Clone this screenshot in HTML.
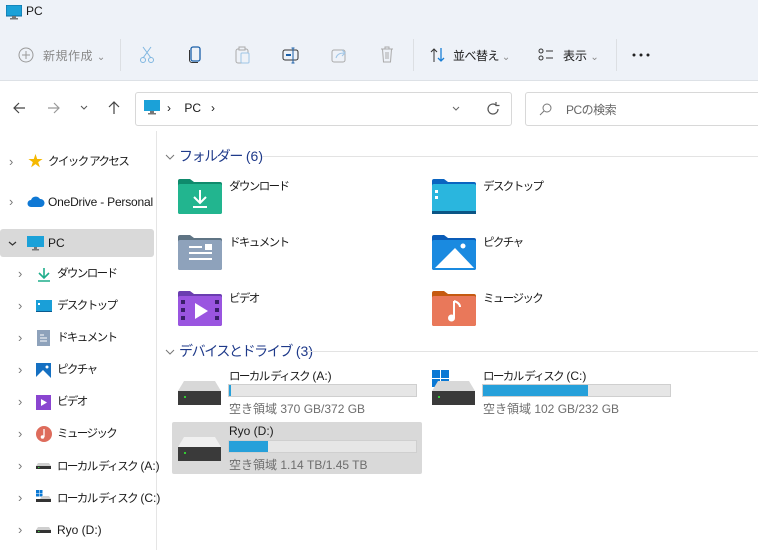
<!DOCTYPE html>
<html><head><meta charset="utf-8"><style>
*{margin:0;padding:0;box-sizing:border-box}
body{width:758px;height:550px;overflow:hidden;background:#fff;font-family:"Liberation Sans","Noto Sans CJK JP",sans-serif;font-size:12px;color:#1a1a1a;position:relative}
.a{position:absolute}
.j{letter-spacing:-1.6px;font-size:11.5px}
.l{letter-spacing:0;font-size:12px}
.hdr .l{font-size:14px}
.top{left:0;top:0;width:758px;height:81px;background:#eef2f8;border-bottom:1px solid #dde1e6}
.g{color:#8a8a8a}
.sep{width:1px;height:32px;background:#dcdfe3;top:39px}
.box{border:1px solid #d8d8d8;border-radius:3px;background:#fff}
.side .it{position:absolute;left:0;width:155px;height:28px;line-height:28px;white-space:nowrap}
.chev{position:absolute;font-size:13px;color:#777}
.hdr{color:#1f3a8a;font-size:14px;letter-spacing:-1.4px}
.line{height:1px;background:#e3e3e3}
.bar{height:13px;background:#e6e6e6;border:1px solid #cfcfcf}
.bar i{display:block;height:100%;background:#26a0da}
.sub{color:#6d6d6d}
</style></head><body>
<div class="a top"></div>
<svg class="a" style="left:6px;top:5px" width="16" height="15"><rect x="0" y="0" width="16" height="11" fill="#1ba1d8"/><rect x="0" y="0" width="16" height="11" fill="none" stroke="#0e6aa0"/><rect x="6" y="11" width="4" height="2" fill="#777"/><rect x="4" y="13" width="8" height="1.5" fill="#777"/></svg>
<div class="a" style="left:26px;top:4px;font-size:12px">PC</div>
<svg class="a" style="left:18px;top:47px" width="16" height="16"><circle cx="8" cy="8" r="7" fill="none" stroke="#9a9a9a"/><path d="M8 4v8M4 8h8" stroke="#9a9a9a"/></svg>
<div class="a g" style="left:43px;top:47px;letter-spacing:0.5px">新規作成 <span style="font-size:10px">⌄</span></div>
<div class="a sep" style="left:120px"></div>
<svg class="a" style="left:139px;top:46px" width="16" height="18"><path d="M4 1l8 11M12 1L4 12" stroke="#7fb6e0" fill="none"/><circle cx="4" cy="14" r="2.5" fill="none" stroke="#7fb6e0"/><circle cx="12" cy="14" r="2.5" fill="none" stroke="#7fb6e0"/></svg>
<svg class="a" style="left:188px;top:46px" width="14" height="18"><rect x="3" y="1" width="9" height="14" rx="2" fill="none" stroke="#1a5fa8" stroke-width="1.3"/><path d="M1.5 4v10a2.5 2.5 0 0 0 2.5 2.5h6" fill="none" stroke="#333"/></svg>
<svg class="a" style="left:235px;top:46px" width="16" height="18"><rect x="1" y="3" width="12" height="14" rx="2" fill="none" stroke="#aaa"/><rect x="4" y="1" width="6" height="3" fill="#eef2f8" stroke="#aaa"/><rect x="6" y="7" width="8" height="10" rx="1" fill="#eef2f8" stroke="#9fc5e6"/></svg>
<svg class="a" style="left:282px;top:47px" width="18" height="17"><rect x="1" y="3" width="15" height="10" rx="2" fill="none" stroke="#333"/><path d="M4 8h5" stroke="#1a5fa8" stroke-width="2"/><path d="M11 1v15M9.5 1h3M9.5 16h3" stroke="#1a5fa8"/></svg>
<svg class="a" style="left:331px;top:46px" width="17" height="17"><rect x="1" y="4" width="13" height="12" rx="2" fill="none" stroke="#aaa"/><path d="M5 12c1-4 4-5 8-5M11 4l3 3-3 3" fill="none" stroke="#9fc5e6"/></svg>
<svg class="a" style="left:380px;top:46px" width="14" height="17"><path d="M1 3h12M5 3V1h4v2M2.5 3l1 13h7l1-13M6 6v7M8 6v7" fill="none" stroke="#aaa"/></svg>
<div class="a sep" style="left:413px"></div>
<svg class="a" style="left:430px;top:47px" width="16" height="16"><path d="M4 15V2M1 5l3-3 3 3" fill="none" stroke="#333"/><path d="M11 1v13M8 11l3 3 3-3" fill="none" stroke="#1a7fd6" stroke-width="1.3"/></svg>
<div class="a" style="left:453px;top:47px;letter-spacing:-0.5px">並べ替え <span class="g" style="font-size:10px">⌄</span></div>
<svg class="a" style="left:538px;top:48px" width="16" height="14"><rect x="1" y="1" width="4" height="4" rx="2" fill="none" stroke="#333"/><rect x="1" y="8" width="4" height="4" rx="2" fill="none" stroke="#333"/><path d="M8 3h7M8 10h7" stroke="#333"/></svg>
<div class="a" style="left:563px;top:47px">表示 <span class="g" style="font-size:10px">⌄</span></div>
<div class="a sep" style="left:616px"></div>
<svg class="a" style="left:632px;top:53px" width="18" height="4"><circle cx="2" cy="2" r="1.5" fill="#222"/><circle cx="9" cy="2" r="1.5" fill="#222"/><circle cx="16" cy="2" r="1.5" fill="#222"/></svg>
<svg class="a" style="left:12px;top:101px" width="14" height="14"><path d="M13 7H2M7 2L2 7l5 5" fill="none" stroke="#444" stroke-width="1.2"/></svg>
<svg class="a" style="left:47px;top:101px" width="14" height="14"><path d="M1 7h11M7 2l5 5-5 5" fill="none" stroke="#999" stroke-width="1.2"/></svg>
<svg class="a" style="left:80px;top:105px" width="8" height="5"><path d="M1 1l3 3 3-3" fill="none" stroke="#555"/></svg>
<svg class="a" style="left:107px;top:100px" width="14" height="15"><path d="M7 14V2M2 7l5-5 5 5" fill="none" stroke="#444" stroke-width="1.2"/></svg>
<div class="a box" style="left:135px;top:92px;width:377px;height:34px"></div>
<svg class="a" style="left:144px;top:100px" width="16" height="15"><rect x="0" y="0" width="16" height="11" fill="#1ba1d8"/><rect x="6" y="11" width="4" height="2" fill="#777"/><rect x="4" y="13" width="8" height="1.5" fill="#777"/></svg>
<div class="a" style="left:167px;top:101px">›&nbsp;&nbsp;&nbsp;&nbsp;PC&nbsp;&nbsp;&nbsp;›</div>
<svg class="a" style="left:452px;top:106px" width="8" height="5"><path d="M1 1l3 3 3-3" fill="none" stroke="#666"/></svg>
<svg class="a" style="left:486px;top:102px" width="14" height="14"><path d="M12 7a5 5 0 1 1-2-4M10 0v3.5h3.5" fill="none" stroke="#555" stroke-width="1.2"/></svg>
<div class="a box" style="left:525px;top:92px;width:240px;height:34px"></div>
<svg class="a" style="left:539px;top:102px" width="14" height="14"><circle cx="8" cy="6" r="4" fill="none" stroke="#777"/><path d="M5 9l-4 4" stroke="#777"/></svg>
<div class="a" style="left:566px;top:101px;color:#666;letter-spacing:-0.5px">PCの検索</div>
<div class="a" style="left:156px;top:131px;width:1px;height:419px;background:#e5e5e5"></div>
<div class="side">
<div class="it" style="top:148px"><span class="chev" style="left:9px">›</span><span class="a" style="left:28px;top:0;color:#f5b800;font-size:15px">★</span><span class="a j" style="left:48px">クイック アクセス</span></div>
<div class="it" style="top:188px"><span class="chev" style="left:9px">›</span><svg class="a" style="left:27px;top:8px" width="18" height="12"><path d="M4 11a3.5 3.5 0 0 1 0-7 5 5 0 0 1 9-1 4 4 0 0 1 1 8z" fill="#0f78d4"/></svg><span class="a" style="left:48px;letter-spacing:-0.2px">OneDrive - Personal</span></div>
<div class="it" style="top:229px;background:#d9d9d9;border-radius:3px;width:154px"><svg class="a" style="left:8px;top:12px" width="9" height="5"><path d="M1 1l3.5 3 3.5-3" fill="none" stroke="#333" stroke-width="1.2"/></svg><svg class="a" style="left:27px;top:7px" width="17" height="15"><rect x="0" y="0" width="17" height="11" fill="#1ba1d8"/><rect x="7" y="11" width="3" height="2" fill="#777"/><rect x="5" y="13" width="7" height="1.5" fill="#777"/></svg><span class="a" style="left:48px">PC</span></div>
<div class="it" style="top:260px"><span class="chev" style="left:18px">›</span><svg class="a" style="left:37px;top:7px" width="14" height="15"><path d="M7 1v10M2 6l5 5 5-5M1 14h12" fill="none" stroke="#1fae8c" stroke-width="1.6"/></svg><span class="a j" style="left:57px">ダウンロード</span></div>
<div class="it" style="top:292px"><span class="chev" style="left:18px">›</span><svg class="a" style="left:36px;top:8px" width="16" height="12"><rect width="16" height="12" fill="#1a9fd8"/><rect x="2" y="3" width="2" height="2" fill="#fff"/><rect x="0" y="11" width="16" height="1" fill="#0b5a8e"/></svg><span class="a j" style="left:57px">デスクトップ</span></div>
<div class="it" style="top:324px"><span class="chev" style="left:18px">›</span><svg class="a" style="left:37px;top:6px" width="13" height="16"><rect width="13" height="16" fill="#8ea2bb"/><path d="M3 5h4M3 8h7M3 11h7" stroke="#fff"/></svg><span class="a j" style="left:57px">ドキュメント</span></div>
<div class="it" style="top:356px"><span class="chev" style="left:18px">›</span><svg class="a" style="left:36px;top:7px" width="15" height="15"><rect width="15" height="15" fill="#1570c2"/><path d="M0 14l7-7 8 8H0z" fill="#fff"/><circle cx="11" cy="4" r="1.5" fill="#fff"/></svg><span class="a j" style="left:57px">ピクチャ</span></div>
<div class="it" style="top:388px"><span class="chev" style="left:18px">›</span><svg class="a" style="left:36px;top:7px" width="15" height="15"><rect width="15" height="15" fill="#8a45d0"/><path d="M5 4l6 3.5-6 3.5z" fill="#fff"/></svg><span class="a j" style="left:57px">ビデオ</span></div>
<div class="it" style="top:420px"><span class="chev" style="left:18px">›</span><svg class="a" style="left:36px;top:6px" width="16" height="16"><circle cx="8" cy="8" r="8" fill="#de6c5c"/><path d="M8 3v8" stroke="#fff" stroke-width="1.3"/><circle cx="6.5" cy="11" r="1.8" fill="#fff"/></svg><span class="a j" style="left:57px">ミュージック</span></div>
<div class="it" style="top:452px"><span class="chev" style="left:18px">›</span><svg class="a" style="left:36px;top:11px" width="15" height="6"><path d="M2 0h11l2 3H0z" fill="#cfcfcf"/><rect y="3" width="15" height="3" fill="#333"/><rect x="2" y="4" width="1.5" height="1" fill="#4c4"/></svg><span class="a j" style="left:57px">ローカル ディスク<span class="l"> (A:)</span></span></div>
<div class="it" style="top:484px"><span class="chev" style="left:18px">›</span><svg class="a" style="left:36px;top:6px" width="15" height="12"><rect x="0" y="0" width="3" height="3" fill="#0a78d4"/><rect x="3.5" y="0" width="3" height="3" fill="#0a78d4"/><rect x="0" y="3.5" width="3" height="3" fill="#0a78d4"/><rect x="3.5" y="3.5" width="3" height="3" fill="#0a78d4"/><path d="M6 6h7l2 3H4z" fill="#cfcfcf"/><rect y="9" width="15" height="3" fill="#333"/></svg><span class="a j" style="left:57px">ローカル ディスク<span class="l"> (C:)</span></span></div>
<div class="it" style="top:516px"><span class="chev" style="left:18px">›</span><svg class="a" style="left:36px;top:11px" width="15" height="6"><path d="M2 0h11l2 3H0z" fill="#cfcfcf"/><rect y="3" width="15" height="3" fill="#333"/><rect x="2" y="4" width="1.5" height="1" fill="#4c4"/></svg><span class="a" style="left:57px">Ryo (D:)</span></div>
</div>
<svg class="a" style="left:165px;top:154px" width="10" height="6"><path d="M1 1l4 4 4-4" fill="none" stroke="#777"/></svg>
<div class="a hdr" style="left:179px;top:146px">フォルダー<span class="l"> (6)</span></div>
<div class="a line" style="left:262px;top:156px;width:496px"></div>

<svg class="a" style="left:178px;top:178px" width="44" height="36"><path d="M0 3a2 2 0 0 1 2-2h10l4 3h26a2 2 0 0 1 2 2v28a2 2 0 0 1-2 2H2a2 2 0 0 1-2-2z" fill="#0f8a6c"/><rect y="6" width="44" height="30" rx="2" fill="#22b58f"/><path d="M22 12v12M16 19l6 6 6-6M15 29h14" fill="none" stroke="#fff" stroke-width="2"/></svg>
<div class="a j" style="left:229px;top:178px">ダウンロード</div>
<svg class="a" style="left:432px;top:178px" width="44" height="36"><path d="M0 3a2 2 0 0 1 2-2h10l4 3h26a2 2 0 0 1 2 2v28a2 2 0 0 1-2 2H2a2 2 0 0 1-2-2z" fill="#0a64c0"/><rect y="6" width="44" height="30" rx="2" fill="#2ab6de"/><rect y="33" width="44" height="3" fill="#0b5585"/><rect x="3" y="12" width="3" height="3" fill="#fff"/><rect x="3" y="18" width="3" height="3" fill="#fff"/></svg>
<div class="a j" style="left:483px;top:178px">デスクトップ</div>

<svg class="a" style="left:178px;top:234px" width="44" height="36"><path d="M0 3a2 2 0 0 1 2-2h10l4 3h26a2 2 0 0 1 2 2v28a2 2 0 0 1-2 2H2a2 2 0 0 1-2-2z" fill="#5f7484"/><rect y="6" width="44" height="30" rx="2" fill="#8ea2bb"/><path d="M11 13h13M11 19h23M11 25h23" stroke="#fff" stroke-width="2"/><rect x="27" y="10" width="7" height="6" fill="#fff"/></svg>
<div class="a j" style="left:229px;top:234px">ドキュメント</div>
<svg class="a" style="left:432px;top:234px" width="44" height="36"><path d="M0 3a2 2 0 0 1 2-2h10l4 3h26a2 2 0 0 1 2 2v28a2 2 0 0 1-2 2H2a2 2 0 0 1-2-2z" fill="#0a5cb8"/><rect y="6" width="44" height="30" rx="2" fill="#1a8ae0"/><path d="M3 34l20-20 19 20z" fill="#fff"/><circle cx="31" cy="12" r="2.5" fill="#fff"/></svg>
<div class="a j" style="left:483px;top:234px">ピクチャ</div>

<svg class="a" style="left:178px;top:290px" width="44" height="36"><path d="M0 3a2 2 0 0 1 2-2h10l4 3h26a2 2 0 0 1 2 2v28a2 2 0 0 1-2 2H2a2 2 0 0 1-2-2z" fill="#6a3db0"/><rect y="6" width="44" height="30" rx="2" fill="#9a55e0"/><path d="M17 13l13 8-13 8z" fill="#fff"/><g fill="#3a1e6a"><rect x="3" y="10" width="4" height="4"/><rect x="3" y="18" width="4" height="4"/><rect x="3" y="26" width="4" height="4"/><rect x="37" y="10" width="4" height="4"/><rect x="37" y="18" width="4" height="4"/><rect x="37" y="26" width="4" height="4"/></g></svg>
<div class="a j" style="left:229px;top:290px">ビデオ</div>
<svg class="a" style="left:432px;top:290px" width="44" height="36"><path d="M0 3a2 2 0 0 1 2-2h10l4 3h26a2 2 0 0 1 2 2v28a2 2 0 0 1-2 2H2a2 2 0 0 1-2-2z" fill="#c55a10"/><rect y="6" width="44" height="30" rx="2" fill="#e9785a"/><path d="M22 11v17" stroke="#fff" stroke-width="2"/><path d="M22 11c3 1 6 3 6 6" fill="none" stroke="#fff" stroke-width="2"/><circle cx="19.5" cy="28" r="3.5" fill="#fff"/></svg>
<div class="a j" style="left:483px;top:290px">ミュージック</div>

<svg class="a" style="left:165px;top:349px" width="10" height="6"><path d="M1 1l4 4 4-4" fill="none" stroke="#777"/></svg>
<div class="a hdr" style="left:179px;top:341px">デバイスとドライブ<span class="l"> (3)</span></div>
<div class="a line" style="left:307px;top:351px;width:451px"></div>

<svg class="a" style="left:178px;top:381px" width="43" height="24"><path d="M6 0h31l6 10H0z" fill="#d8d8d8"/><rect y="10" width="43" height="14" fill="#3a3a3a"/><rect x="6" y="15" width="2" height="2" fill="#3c3"/></svg>
<div class="a j" style="left:229px;top:368px">ローカル ディスク<span class="l"> (A:)</span></div>
<div class="a bar" style="left:228px;top:384px;width:189px"><i style="width:1%"></i></div>
<div class="a sub" style="left:229px;top:400px">空き領域 370 GB/372 GB</div>

<svg class="a" style="left:432px;top:370px" width="18" height="18"><rect width="8" height="8" fill="#0a78d4"/><rect x="9" width="8" height="8" fill="#0a78d4"/><rect y="9" width="8" height="8" fill="#0a78d4"/><rect x="9" y="9" width="8" height="8" fill="#0a78d4"/></svg>
<svg class="a" style="left:432px;top:381px" width="43" height="24"><path d="M6 0h31l6 10H0z" fill="#d8d8d8"/><rect y="10" width="43" height="14" fill="#3a3a3a"/><rect x="6" y="15" width="2" height="2" fill="#3c3"/></svg>
<div class="a j" style="left:483px;top:368px">ローカル ディスク<span class="l"> (C:)</span></div>
<div class="a bar" style="left:482px;top:384px;width:189px"><i style="width:56%"></i></div>
<div class="a sub" style="left:483px;top:400px">空き領域 102 GB/232 GB</div>

<div class="a" style="left:172px;top:422px;width:250px;height:52px;background:#d9d9d9;border-radius:2px"></div>
<svg class="a" style="left:178px;top:437px" width="43" height="24"><path d="M6 0h31l6 10H0z" fill="#f0f0f0"/><rect y="10" width="43" height="14" fill="#3a3a3a"/><rect x="6" y="15" width="2" height="2" fill="#3c3"/></svg>
<div class="a" style="left:229px;top:424px">Ryo (D:)</div>
<div class="a bar" style="left:228px;top:440px;width:189px"><i style="width:21%"></i></div>
<div class="a sub" style="left:229px;top:456px">空き領域 1.14 TB/1.45 TB</div>
</body></html>
